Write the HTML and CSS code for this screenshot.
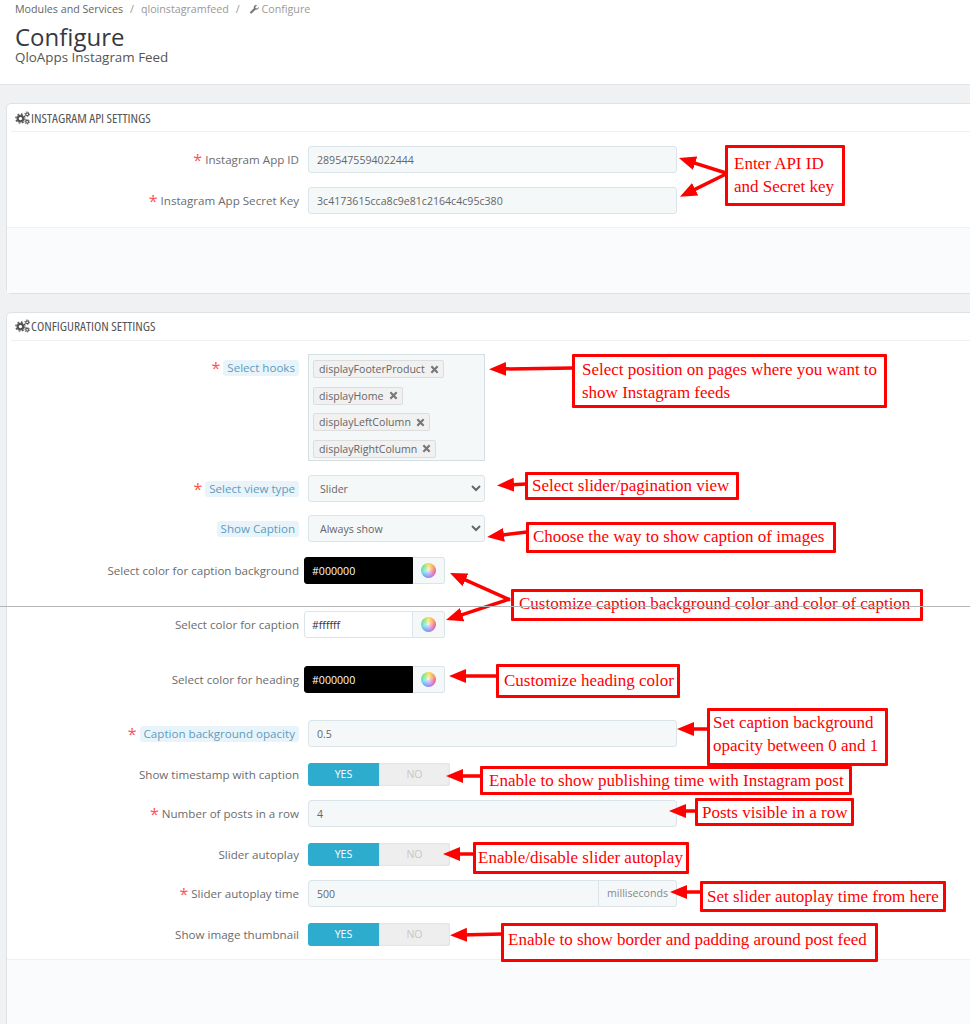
FILE: index.html
```html
<!DOCTYPE html>
<html lang="en">
<head>
  <meta charset="UTF-8">
  <meta name="viewport" content="width=device-width, initial-scale=1.0">
  <title>Configure - QloApps Instagram Feed</title>
  <link rel="stylesheet" href="styles.css">
</head>
<body>

<svg class="icon-defs" width="0" height="0">
  <symbol id="cogs" viewBox="0 0 16 14">
    <circle cx="5.800" cy="7.600" r="3" fill="none" stroke="#555" stroke-width="2.400"/>
    <circle cx="5.800" cy="7.600" r="4.900" fill="none" stroke="#555" stroke-width="1.400" stroke-dasharray="1.900 1.950"/>
    <circle cx="13" cy="3" r="1.500" fill="none" stroke="#555" stroke-width="1.200"/>
    <circle cx="13" cy="3" r="2.500" fill="none" stroke="#555" stroke-width="1" stroke-dasharray="1.200 1.200"/>
    <circle cx="13" cy="11" r="1.500" fill="none" stroke="#555" stroke-width="1.200"/>
    <circle cx="13" cy="11" r="2.500" fill="none" stroke="#555" stroke-width="1" stroke-dasharray="1.200 1.200"/>
  </symbol>
  <symbol id="times" viewBox="0 0 10 10">
    <path d="M1.500 1.500l7 7M8.500 1.500l-7 7" fill="none" stroke="#777" stroke-width="2.400"/>
  </symbol>
</svg>

<div class="page">
  <header class="page-head">
    <nav class="breadcrumb">
      <span class="crumb-first">Modules and Services</span>
      <span class="crumb-sep">/</span>
      <span>qloinstagramfeed</span>
      <span class="crumb-sep">/</span>
      <span class="crumb-last">
        <svg class="wrench" viewBox="0 0 10 10" width="9" height="9"><path fill="#777" d="M9.800 2.200L8 4 6.300 3.600 5.900 2 7.800.2C6.300-.3 4.500.500 4.200 2.100c-.1.500-.1 1 .1 1.500L.4 7.500c-.5.500-.5 1.200-.1 1.700.5.500 1.300.500 1.800 0l3.900-3.900c1.900.5 3.800-.8 3.900-2.700 0-.2 0-.3-.1-.4z"/></svg>
        Configure
      </span>
    </nav>
    <h1 class="page-title">Configure</h1>
    <p class="page-subtitle">QloApps Instagram Feed</p>
  </header>

  <main class="content">
    <section class="panel">
      <h2 class="panel-heading"><svg class="cogs"><use href="#cogs"/></svg>INSTAGRAM API SETTINGS</h2>
      <div class="form-body form-body-api">
        <div class="form-row">
          <label class="control-label"><span class="req">*</span>Instagram App ID</label>
          <input class="form-control" type="text" value="2895475594022444">
        </div>
        <div class="form-row form-row-last">
          <label class="control-label"><span class="req">*</span>Instagram App Secret Key</label>
          <input class="form-control" type="text" value="3c4173615cca8c9e81c2164c4c95c380">
        </div>
      </div>
      <div class="panel-footer panel-footer-api"></div>
    </section>

    <section class="panel panel-config">
      <h2 class="panel-heading"><svg class="cogs"><use href="#cogs"/></svg>CONFIGURATION SETTINGS</h2>
      <div class="form-body">
        <div class="form-row form-row-top">
          <label class="control-label"><span class="req">*</span><span class="hint">Select hooks</span></label>
          <div class="tag-box">
            <span class="tag">displayFooterProduct<svg class="tag-x"><use href="#times"/></svg></span>
            <span class="tag">displayHome<svg class="tag-x"><use href="#times"/></svg></span>
            <span class="tag">displayLeftColumn<svg class="tag-x"><use href="#times"/></svg></span>
            <span class="tag">displayRightColumn<svg class="tag-x"><use href="#times"/></svg></span>
          </div>
        </div>
        <div class="form-row gap-13">
          <label class="control-label"><span class="req">*</span><span class="hint">Select view type</span></label>
          <select class="form-select"><option>Slider</option></select>
        </div>
        <div class="form-row gap-15">
          <label class="control-label"><span class="hint">Show Caption</span></label>
          <select class="form-select"><option>Always show</option></select>
        </div>
        <div class="form-row gap-27">
          <label class="control-label">Select color for caption background</label>
          <div class="color-group">
            <input class="color-input color-black" type="text" value="#000000">
            <span class="color-addon"><span class="color-wheel"></span></span>
          </div>
        </div>
        <div class="form-row gap-28">
          <label class="control-label">Select color for caption</label>
          <div class="color-group">
            <input class="color-input" type="text" value="#ffffff">
            <span class="color-addon"><span class="color-wheel"></span></span>
          </div>
        </div>
        <div class="form-row gap-27">
          <label class="control-label">Select color for heading</label>
          <div class="color-group">
            <input class="color-input color-black" type="text" value="#000000">
            <span class="color-addon"><span class="color-wheel"></span></span>
          </div>
        </div>
        <div class="form-row gap-13">
          <label class="control-label"><span class="req">*</span><span class="hint">Caption background opacity</span></label>
          <input class="form-control" type="text" value="0.5">
        </div>
        <div class="form-row form-row-switch">
          <label class="control-label">Show timestamp with caption</label>
          <div class="switch"><span class="switch-yes">YES</span><span class="switch-no">NO</span></div>
        </div>
        <div class="form-row gap-13">
          <label class="control-label"><span class="req">*</span>Number of posts in a row</label>
          <input class="form-control" type="text" value="4">
        </div>
        <div class="form-row form-row-switch">
          <label class="control-label">Slider autoplay</label>
          <div class="switch"><span class="switch-yes">YES</span><span class="switch-no">NO</span></div>
        </div>
        <div class="form-row gap-13">
          <label class="control-label"><span class="req">*</span>Slider autoplay time</label>
          <div class="input-group">
            <input class="form-control" type="text" value="500">
            <span class="input-addon">milliseconds</span>
          </div>
        </div>
        <div class="form-row form-row-switch form-row-last">
          <label class="control-label">Show image thumbnail</label>
          <div class="switch"><span class="switch-yes">YES</span><span class="switch-no">NO</span></div>
        </div>
      </div>
      <div class="panel-footer"></div>
    </section>
  </main>

  <!-- annotations drawn on top of the screenshot -->
  <svg class="arrows" width="970" height="1024" viewBox="0 0 970 1024">
    <defs>
      <marker id="head" markerUnits="userSpaceOnUse" markerWidth="18" markerHeight="16" refX="7" refY="8" orient="auto">
        <path d="M0 1L17 8L0 15z" fill="#f00"/>
      </marker>
    </defs>
    <g class="arrow-lines" marker-end="url(#head)">
      <line x1="726" y1="173" x2="688.500" y2="161.100"/>
      <line x1="726" y1="174" x2="688.900" y2="192.400"/>
      <line x1="573" y1="368" x2="499" y2="369"/>
      <line x1="526" y1="484" x2="507" y2="485"/>
      <line x1="527" y1="532" x2="497" y2="535.700"/>
      <line x1="510" y1="600" x2="459.100" y2="577.100"/>
      <line x1="510" y1="599" x2="455.500" y2="616.800"/>
      <line x1="497" y1="676" x2="459" y2="676"/>
      <line x1="708" y1="729" x2="687" y2="729"/>
      <line x1="481" y1="776" x2="456" y2="776"/>
      <line x1="696" y1="811" x2="679" y2="811"/>
      <line x1="474" y1="854" x2="453" y2="854"/>
      <line x1="701" y1="892" x2="680" y2="892"/>
      <line x1="503" y1="934" x2="460" y2="935"/>
    </g>
  </svg>

  <div class="note note-api">Enter API ID<br>and Secret key</div>
  <div class="note note-hooks">Select position on pages where you want to<br>show Instagram feeds</div>
  <div class="note note-view">Select slider/pagination view</div>
  <div class="note note-caption">Choose the way to show caption of images</div>
  <div class="note note-colors">Customize caption background color and color of caption</div>
  <div class="note note-heading">Customize heading color</div>
  <div class="note note-opacity">Set caption background<br>opacity between 0 and 1</div>
  <div class="note note-time">Enable to show publishing time with Instagram post</div>
  <div class="note note-posts">Posts visible in a row</div>
  <div class="note note-autoplay">Enable/disable slider autoplay</div>
  <div class="note note-slider">Set slider autoplay time from here</div>
  <div class="note note-thumb">Enable to show border and padding around post feed</div>
  <div class="seam"></div>
</div>

</body>
</html>
```

FILE: styles.css
```css
* {
  box-sizing: border-box;
}
body {
  margin: 0;
  font-family: "Open Sans", Arial, sans-serif;
  color: #666;
  background-color: #eff1f2;
}
.icon-defs {
  position: absolute;
}
.page {
  position: relative;
  width: 970px;
  height: 1024px;
  overflow: hidden;
}

/* page header */
.page-head {
  height: 85px;
  padding-left: 15px;
  background-color: #fff;
  border-bottom: 1px solid #e3e5e6;
}
.breadcrumb {
  display: flex;
  height: 18px;
  align-items: center;
  font-size: 10.700px;
  color: #999;
}
.crumb-first {
  color: #666;
}
.crumb-sep {
  margin: 0 7px;
}
.crumb-last {
  margin-left: 3px;
}
.wrench {
  vertical-align: -1px;
}
.page-title {
  margin: 5px 0 0;
  font-size: 24px;
  font-weight: 400;
  line-height: 27px;
  color: #363a41;
}
.page-subtitle {
  margin: 0;
  font-size: 13.400px;
  line-height: 14px;
  color: #555;
}

/* panels */
.content {
  padding: 18px 0 0 6px;
  margin-right: -12px;
}
.panel {
  background-color: #fff;
  border: 1px solid #dfe2e4;
  border-radius: 5px;
  margin-bottom: 18px;
}
.panel-heading {
  display: flex;
  align-items: center;
  height: 28px;
  margin: 0 0 0 4px;
  padding-left: 4px;
  border-bottom: 1px solid #eef0f1;
  font-family: "Open Sans", sans-serif;
  font-stretch: 75%;
  font-size: 13.400px;
  font-weight: 400;
  color: #555;
}
.panel-config .panel-heading {
  padding-bottom: 2px;
}
.cogs {
  width: 15px;
  height: 14px;
  margin-right: 1px;
}
.form-body {
  display: flex;
  flex-direction: column;
  padding-top: 13px;
}
.form-body-api {
  padding-top: 14px;
}
.panel-footer {
  height: 80px;
  background-color: #fafbfc;
  border-top: 1px solid #eef0f1;
}
.panel-footer-api {
  height: 66px;
}

/* form rows */
.form-row {
  display: flex;
  align-items: center;
  margin-bottom: 14px;
}
.form-row-top {
  align-items: flex-start;
}
.gap-13 {
  margin-bottom: 13px;
}
.gap-15 {
  margin-bottom: 15px;
}
.gap-27 {
  margin-bottom: 27px;
}
.gap-28 {
  margin-bottom: 28px;
}
.form-row-switch {
  margin-top: 3px;
}
.form-row-last {
  margin-bottom: 13px;
}
.control-label {
  display: flex;
  flex: none;
  justify-content: flex-end;
  align-items: center;
  width: 292px;
  margin-right: 9px;
  font-size: 11.600px;
  line-height: 16px;
  color: #6c6c6c;
}
.form-row-top .control-label {
  margin-top: 6px;
}
.req {
  margin-right: 3px;
  font-size: 16px;
  line-height: 10px;
  color: #ff5450;
}
.hint {
  padding: 0 4px;
  background-color: #e9f4fa;
  border-radius: 3px;
  color: #5d9cbf;
}
.form-control,
.form-select,
.color-input {
  height: 27px;
  font-family: inherit;
  font-size: 10.600px;
  color: #666;
  background-color: #f5f8f9;
  border: 1px solid #dbe4e8;
  border-radius: 3px;
  outline: none;
}
.form-control {
  flex: none;
  width: 369px;
  padding: 0 8px;
}
.form-select {
  width: 177px;
  padding-left: 7px;
}

/* hook tags */
.tag-box {
  display: flex;
  flex-direction: column;
  align-items: flex-start;
  gap: 8.500px;
  width: 177px;
  height: 107px;
  padding: 5px 0 0 4px;
  background-color: #f5f8f9;
  border: 1px solid #d5dfe3;
}
.tag {
  display: flex;
  align-items: center;
  height: 18px;
  padding: 0 4px 0 5px;
  font-size: 10.600px;
  color: #666;
  background-color: #f1f1f1;
  border: 1px solid #ddd;
  border-radius: 2px;
}
.tag-x {
  width: 9px;
  height: 9px;
  margin-left: 5px;
}

/* colour pickers */
.color-group {
  display: flex;
  margin-left: -4px;
}
.color-input {
  width: 109px;
  padding: 0 7px;
  color: #333;
  background-color: #fff;
  border-radius: 3px 0 0 3px;
}
.color-black {
  color: #fff;
  background-color: #000;
  border-color: #000;
}
.color-addon {
  display: flex;
  align-items: center;
  justify-content: center;
  width: 32px;
  height: 27px;
  background-color: #f5f8f9;
  border: 1px solid #dbe4e8;
  border-left: 0;
  border-radius: 0 3px 3px 0;
}
.color-wheel {
  width: 15px;
  height: 15px;
  border-radius: 50%;
  background: radial-gradient(circle, rgba(255,255,255,.8) 0, rgba(255,255,255,.1) 70%),
    conic-gradient(#f7d83a, #f2913a, #e8457a, #a565e8, #5a8df2, #45d6e0, #5fdc6a, #f7d83a);
}

/* yes/no switch */
.switch {
  display: flex;
  width: 142px;
  height: 23px;
  font-size: 10.600px;
  line-height: 23px;
  text-align: center;
}
.switch-yes {
  flex: 1;
  color: #fff;
  background-color: #2eacce;
  border-radius: 3px 0 0 3px;
}
.switch-no {
  flex: 1;
  color: #c7c7c7;
  background-color: #eee;
  border-radius: 0 3px 3px 0;
  box-shadow: inset 0 0 2px #ccc;
}
.input-group {
  display: flex;
  width: 369px;
}
.input-group .form-control {
  width: 291px;
  border-radius: 3px 0 0 3px;
}
.input-addon {
  flex: 1;
  font-size: 10.600px;
  line-height: 25px;
  text-align: center;
  height: 27px;
  color: #888;
  background-color: #f5f8f9;
  border: 1px solid #dbe4e8;
  border-left: 0;
  border-radius: 0 3px 3px 0;
}

/* annotations */
.seam {
  position: absolute;
  left: 0;
  top: 606px;
  width: 100%;
  height: 1px;
  background-color: #b5b5b5;
}
.arrows {
  position: absolute;
  left: 0;
  top: 0;
}
.arrow-lines line {
  stroke: #f00;
  stroke-width: 3.500px;
}
.note {
  position: absolute;
  font-family: "Liberation Serif", "Times New Roman", serif;
  font-size: 17px;
  line-height: 23px;
  color: #f00;
  white-space: nowrap;
  background-color: #fff;
  border: 3px solid #f00;
  border-radius: 1px;
}
.note-api { left: 725px; top: 145px; width: 120px; height: 61px; padding: 4px 0 0 6px; }
.note-hooks { left: 572px; top: 354px; width: 315px; height: 54px; padding: 1px 0 0 7px; }
.note-view { left: 525px; top: 472px; width: 214px; height: 28px; padding-left: 4px; line-height: 21px; }
.note-caption { left: 526px; top: 522px; width: 310px; height: 31px; padding-left: 4px; }
.note-colors { left: 511px; top: 589px; width: 412px; height: 32px; padding-left: 5px; line-height: 24px; }
.note-heading { left: 496px; top: 664px; width: 184px; height: 34px; padding: 2px 0 0 5px; }
.note-opacity { left: 707px; top: 708px; width: 181px; height: 58px; padding: 0 0 0 3px; }
.note-time { left: 480px; top: 766px; width: 372px; height: 29px; padding-left: 6px; line-height: 24px; }
.note-posts { left: 695px; top: 798px; width: 159px; height: 28px; padding-left: 4px; line-height: 23px; }
.note-autoplay { left: 473px; top: 842px; width: 216px; height: 32px; padding-left: 2px; line-height: 26px; }
.note-slider { left: 700px; top: 881px; width: 246px; height: 31px; padding-left: 4px; line-height: 26px; }
.note-thumb { left: 501px; top: 923px; width: 377px; height: 39px; padding: 2px 0 0 4px; }
```
